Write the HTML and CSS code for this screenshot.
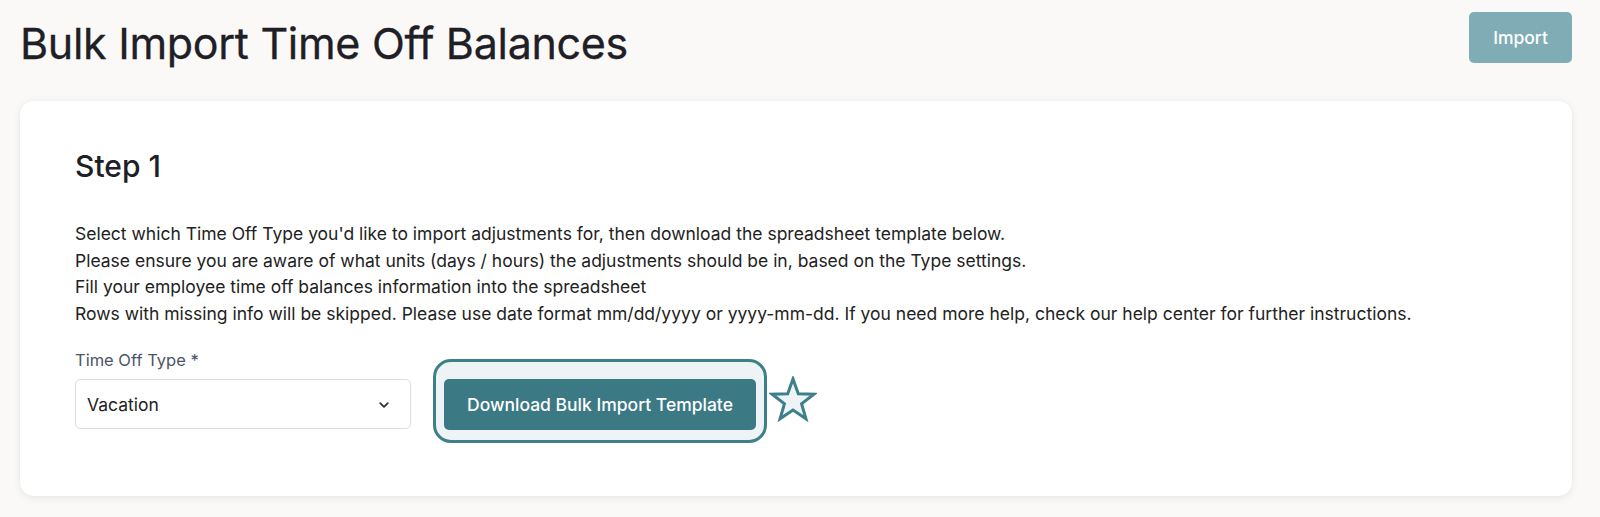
FILE: index.html
```html
<!DOCTYPE html>
<html lang="en">
<head>
<meta charset="utf-8">
<title>Bulk Import Time Off Balances</title>
<link rel="stylesheet" href="styles.css">
</head>
<body>
<div class="page">
  <header class="header">
    <h1 class="title">Bulk Import Time Off Balances</h1>
    <button class="import-btn" type="button">Import</button>
  </header>
  <section class="card">
    <h2 class="step">Step 1</h2>
    <div class="desc">
      <p>Select which Time Off Type you'd like to import adjustments for, then download the spreadsheet template below.</p>
      <p>Please ensure you are aware of what units (days / hours) the adjustments should be in, based on the Type settings.</p>
      <p>Fill your employee time off balances information into the spreadsheet</p>
      <p>Rows with missing info will be skipped. Please use date format mm/dd/yyyy or yyyy-mm-dd. If you need more help, check our help center for further instructions.</p>
    </div>
    <div class="form-row">
      <div class="field">
        <label class="label">Time Off Type *</label>
        <div class="select">
          <span>Vacation</span>
          <svg class="chev" width="10" height="6" viewBox="0 0 10 6"><path d="M1.2 1.2 L5 4.8 L8.8 1.2" fill="none" stroke="#2a2f3a" stroke-width="1.7" stroke-linecap="round" stroke-linejoin="round"/></svg>
        </div>
      </div>
      <div class="highlight">
        <button class="download-btn" type="button">Download Bulk Import Template</button>
      </div>
      <svg class="star" width="48" height="46" viewBox="0 0 48 46"><polygon points="24,3 29.29,17.72 44.92,18.2 32.56,27.78 36.93,42.8 24,34 11.07,42.8 15.44,27.78 3.08,18.2 18.71,17.72" fill="#eef4f6" stroke="#3e808a" stroke-width="3" stroke-linejoin="miter"/></svg>
    </div>
  </section>
</div>
</body>
</html>
```

FILE: styles.css
```css
* { box-sizing: border-box; }
html, body { margin: 0; padding: 0; }
body {
  background: #faf9f7;
  font-family: Inter, "Noto Sans", sans-serif;
  color: #262626;
  width: 1600px;
  height: 517px;
  overflow: hidden;
}
.page {
  padding: 12px 28px 0 20px;
}
.header {
  display: flex;
  justify-content: space-between;
  align-items: flex-start;
  height: 89px;
}
.title {
  margin: 6px 0 0 0;
  font-size: 43px;
  line-height: 50px;
  font-weight: 400;
  color: #1e2026;
  letter-spacing: -0.3px;
  -webkit-text-stroke: 0.3px #1e2026;
}
.import-btn {
  width: 103px;
  height: 51px;
  border: none;
  border-radius: 5px;
  background: #80adb5;
  color: #fff;
  font-family: Inter, "Noto Sans", sans-serif;
  font-size: 17.5px;
  font-weight: 500;
  padding: 0;
}
.card {
  background: #fff;
  border-radius: 14px;
  box-shadow: 0 2px 8px rgba(0, 0, 0, 0.08), 0 0 2px rgba(0,0,0,0.03);
  height: 395px;
  padding: 47px 54px 0 55px;
}
.step {
  margin: 0;
  font-size: 30px;
  line-height: 36px;
  font-weight: 500;
  color: #1e2026;
}
.desc {
  margin-top: 37px;
}
.desc p {
  margin: 0;
  font-size: 17.5px;
  line-height: 26.5px;
  color: #222;
}
.form-row {
  display: flex;
  align-items: flex-start;
  margin-top: 23px;
}
.field {
  display: flex;
  flex-direction: column;
  width: 336px;
}
.label {
  font-size: 16.5px;
  line-height: 20px;
  color: #4b5468;
  margin-bottom: 9px;
}
.select {
  height: 50px;
  border: 1px solid #dedede;
  border-radius: 5px;
  display: flex;
  align-items: center;
  justify-content: space-between;
  padding: 0 21px 0 11px;
  font-size: 17.5px;
  color: #222;
}
.chev { margin-top: 2px; }
.highlight {
  margin: 9px 0 0 22px;
  border: 3px solid #3e808a;
  border-radius: 18px;
  background: #eef4f6;
  padding: 17px 8px 10px 8px;
}
.download-btn {
  display: block;
  width: 312px;
  height: 51px;
  border: none;
  border-radius: 5px;
  background: #3b7984;
  color: #fff;
  font-family: Inter, "Noto Sans", sans-serif;
  font-size: 17.5px;
  font-weight: 500;
  padding: 0;
}
.star {
  margin: 26px 0 0 2px;
}
```
